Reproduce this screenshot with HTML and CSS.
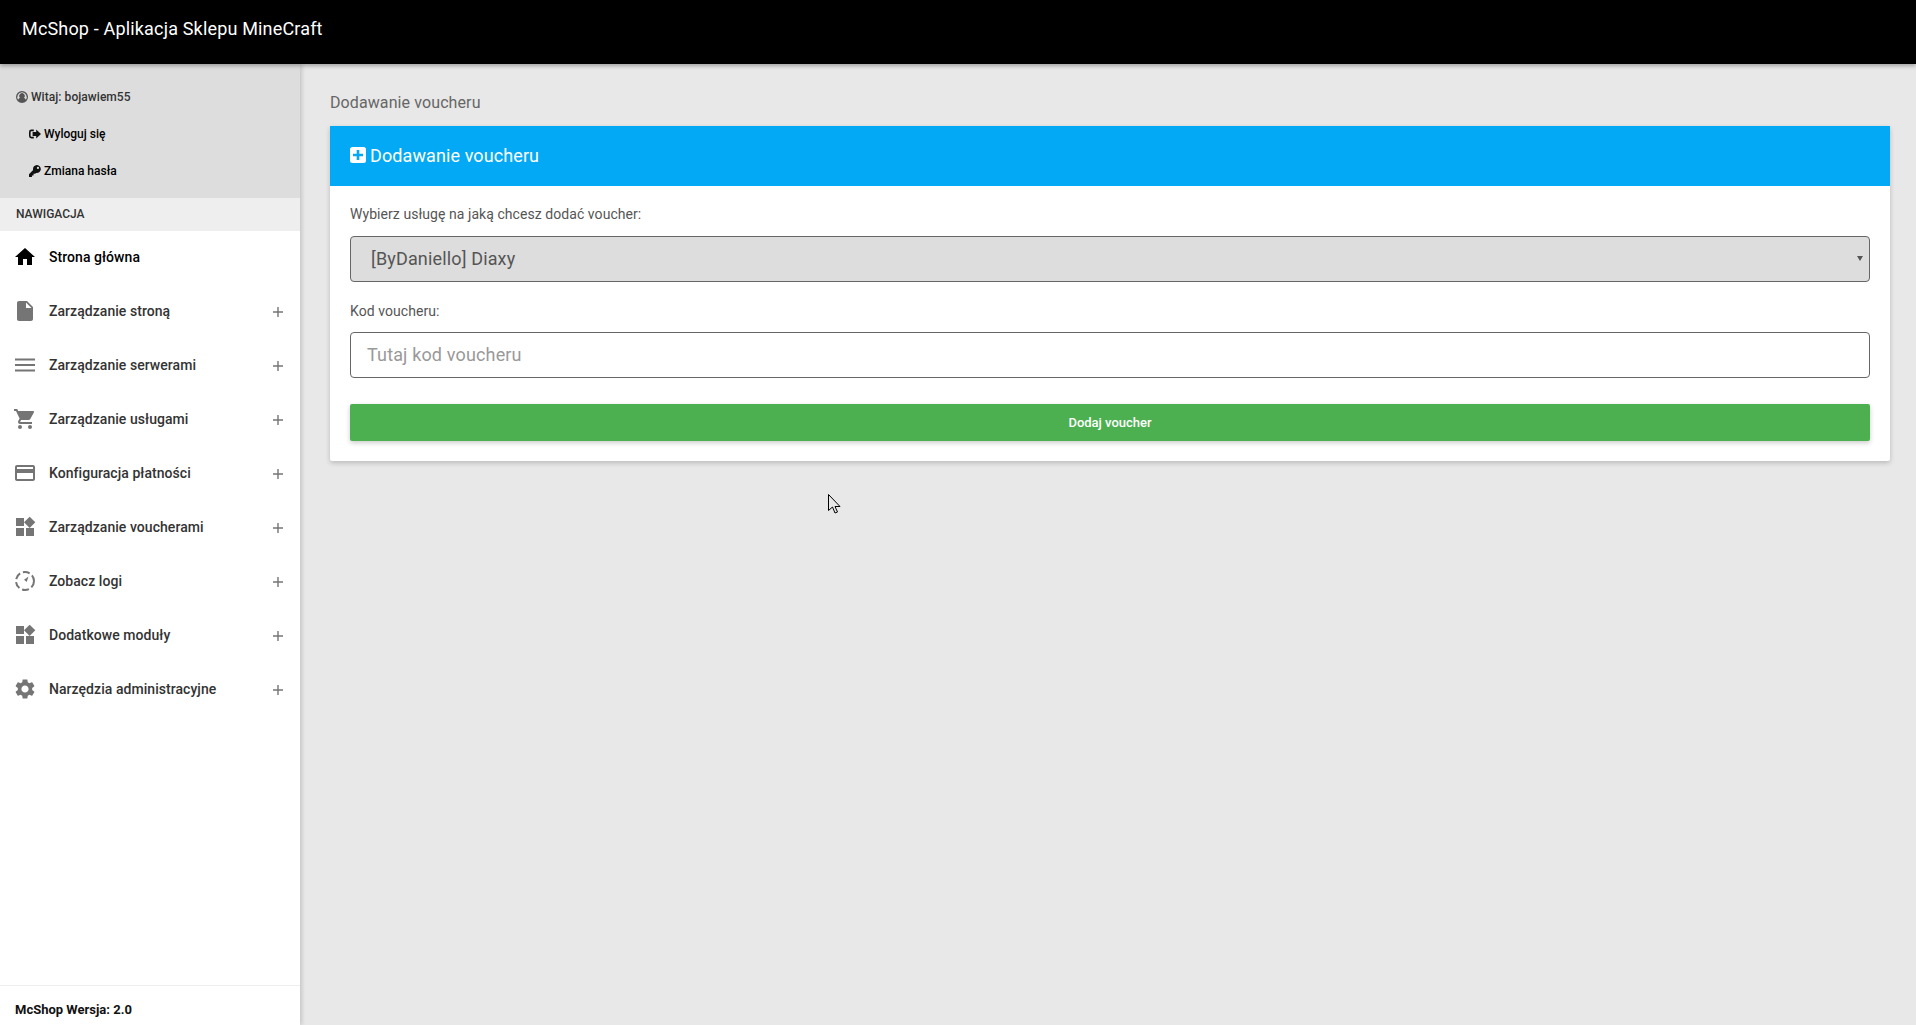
FILE: index.html
```html
<!DOCTYPE html>
<html lang="pl">
<head>
<meta charset="utf-8">
<title>McShop</title>
<link rel="stylesheet" href="styles.css">
</head>
<body>
<header class="topbar">McShop - Aplikacja Sklepu MineCraft</header>
<div class="layout">
  <aside class="sidebar">
    <div class="user-panel">
      <div class="user-row user-hello">
        <svg class="fa" viewBox="0.5 0.500 15 15"><path fill-rule="evenodd" d="M8 .5a7.500 7.500 0 1 0 0 15 7.500 7.500 0 0 0 0-15zm0 1.600a5.900 5.900 0 0 1 4.700 9.400c-.5-1.400-1.300-2.200-2.300-2.500a3.400 3.400 0 1 0-4.800 0c-1 .3-1.800 1.100-2.300 2.500A5.900 5.900 0 0 1 8 2.100z"/></svg>
        <span>Witaj: bojawiem55</span>
      </div>
      <div class="user-row user-link">
        <svg class="fa" viewBox="0.5 0.500 15 15"><path d="M6.500 2.500H3.500A3 3 0 0 0 .5 5.500v5a3 3 0 0 0 3 3h3v-2H3.500a1 1 0 0 1-1-1v-5a1 1 0 0 1 1-1h3z"/><path d="M9.500 2.500l6 5.500-6 5.500V10.500H5v-5h4.500z"/></svg>
        <span>Wyloguj się</span>
      </div>
      <div class="user-row user-link">
        <svg class="fa" viewBox="0.5 0.500 15 15"><path fill-rule="evenodd" d="M10.500.5a5 5 0 0 0-4.800 6.400L.5 12.100v3.400h3.700v-2h2v-2h2l1.100-1.100A5 5 0 1 0 10.500.5zm1.200 2.200a1.400 1.400 0 1 1 0 2.800 1.400 1.400 0 0 1 0-2.800z"/></svg>
        <span>Zmiana hasła</span>
      </div>
    </div>
    <div class="nav-title">NAWIGACJA</div>
    <nav class="nav">
      <a class="nav-item active">
        <svg class="mi" viewBox="0 0 24 24"><path d="M10 20v-6h4v6h5v-8h3L12 3 2 12h3v8z"/></svg>
        <span class="nav-label">Strona główna</span>
      </a>
      <a class="nav-item">
        <svg class="mi" viewBox="0 0 24 24"><path d="M6 2c-1.100 0-1.990.9-1.990 2L4 20c0 1.100.89 2 1.990 2H18c1.100 0 2-.9 2-2V8l-6-6H6zm7 7V3.500L18.500 9H13z"/></svg>
        <span class="nav-label">Zarządzanie stroną</span>
        <svg class="plus" viewBox="0 0 10 10"><path d="M4.300 0h1.400v4.300H10v1.400H5.700V10H4.300V5.700H0V4.300h4.300z"/></svg>
      </a>
      <a class="nav-item">
        <svg class="mi" viewBox="0 0 24 24"><path d="M2 5.500h20v2H2zM2 11h20v2H2zM2 16.500h20v2H2z"/></svg>
        <span class="nav-label">Zarządzanie serwerami</span>
        <svg class="plus" viewBox="0 0 10 10"><path d="M4.300 0h1.400v4.300H10v1.400H5.700V10H4.300V5.700H0V4.300h4.300z"/></svg>
      </a>
      <a class="nav-item">
        <svg class="mi" viewBox="0 0 24 24"><path d="M7 18c-1.100 0-1.990.9-1.990 2S5.900 22 7 22s2-.9 2-2-.9-2-2-2zM1 2v2h2l3.600 7.590-1.350 2.450c-.16.28-.25.61-.25.96 0 1.100.9 2 2 2h12v-2H7.420c-.14 0-.25-.11-.25-.25l.03-.12.9-1.630h7.450c.75 0 1.410-.41 1.750-1.030l3.580-6.490c.08-.14.12-.31.12-.48 0-.55-.45-1-1-1H5.210l-.94-2H1zm16 16c-1.100 0-1.990.9-1.990 2s.89 2 1.990 2 2-.9 2-2-.9-2-2-2z"/></svg>
        <span class="nav-label">Zarządzanie usługami</span>
        <svg class="plus" viewBox="0 0 10 10"><path d="M4.300 0h1.400v4.300H10v1.400H5.700V10H4.300V5.700H0V4.300h4.300z"/></svg>
      </a>
      <a class="nav-item">
        <svg class="mi" viewBox="0 0 24 24"><path d="M20 4H4c-1.110 0-1.990.89-1.990 2L2 18c0 1.110.89 2 2 2h16c1.110 0 2-.89 2-2V6c0-1.110-.89-2-2-2zm0 14H4v-6h16v6zm0-10H4V6h16v2z"/></svg>
        <span class="nav-label">Konfiguracja płatności</span>
        <svg class="plus" viewBox="0 0 10 10"><path d="M4.300 0h1.400v4.300H10v1.400H5.700V10H4.300V5.700H0V4.300h4.300z"/></svg>
      </a>
      <a class="nav-item">
        <svg class="mi" viewBox="0 0 24 24"><path d="M13 13v8h8v-8h-8zM3 21h8v-8H3v8zM3 3v8h8V3H3zm13.660-1.310L11 7.340 16.660 13l5.660-5.660-5.660-5.650z"/></svg>
        <span class="nav-label">Zarządzanie voucherami</span>
        <svg class="plus" viewBox="0 0 10 10"><path d="M4.300 0h1.400v4.300H10v1.400H5.700V10H4.300V5.700H0V4.300h4.300z"/></svg>
      </a>
      <a class="nav-item">
        <svg class="mi" viewBox="0 0 24 24"><circle class="dash" cx="12" cy="12" r="9"/><path d="M15.500 7.500l-1.800 5.500-2.700-2.200z"/></svg>
        <span class="nav-label">Zobacz logi</span>
        <svg class="plus" viewBox="0 0 10 10"><path d="M4.300 0h1.400v4.300H10v1.400H5.700V10H4.300V5.700H0V4.300h4.300z"/></svg>
      </a>
      <a class="nav-item">
        <svg class="mi" viewBox="0 0 24 24"><path d="M13 13v8h8v-8h-8zM3 21h8v-8H3v8zM3 3v8h8V3H3zm13.660-1.310L11 7.340 16.660 13l5.660-5.660-5.660-5.650z"/></svg>
        <span class="nav-label">Dodatkowe moduły</span>
        <svg class="plus" viewBox="0 0 10 10"><path d="M4.300 0h1.400v4.300H10v1.400H5.700V10H4.300V5.700H0V4.300h4.300z"/></svg>
      </a>
      <a class="nav-item">
        <svg class="mi" viewBox="0 0 24 24"><path d="M19.140 12.940c.04-.3.06-.61.06-.94 0-.32-.02-.64-.07-.94l2.030-1.580c.18-.14.23-.41.12-.61l-1.920-3.320c-.12-.22-.37-.29-.59-.22l-2.390.96c-.5-.38-1.030-.7-1.620-.94l-.36-2.540c-.04-.24-.24-.41-.48-.41h-3.840c-.24 0-.43.17-.47.41l-.36 2.540c-.59.24-1.130.57-1.620.94l-2.390-.96c-.22-.08-.47 0-.59.22L2.740 8.870c-.12.21-.08.47.12.61l2.030 1.580c-.05.3-.09.63-.09.94s.02.64.07.94l-2.030 1.580c-.18.14-.23.41-.12.61l1.920 3.320c.12.22.37.29.59.22l2.390-.96c.5.38 1.030.7 1.620.94l.36 2.540c.05.24.24.41.48.41h3.840c.24 0 .44-.17.47-.41l.36-2.540c.59-.24 1.130-.56 1.620-.94l2.390.96c.22.08.47 0 .59-.22l1.920-3.320c.12-.22.07-.47-.12-.61l-2.010-1.580zM12 15.600c-1.980 0-3.600-1.620-3.600-3.600s1.620-3.600 3.600-3.600 3.600 1.620 3.600 3.600-1.620 3.600-3.600 3.600z"/></svg>
        <span class="nav-label">Narzędzia administracyjne</span>
        <svg class="plus" viewBox="0 0 10 10"><path d="M4.300 0h1.400v4.300H10v1.400H5.700V10H4.300V5.700H0V4.300h4.300z"/></svg>
      </a>
    </nav>
    <footer class="sidebar-footer">McShop Wersja: 2.0</footer>
  </aside>
  <main class="main">
    <h1 class="page-title">Dodawanie voucheru</h1>
    <section class="card">
      <h2 class="card-header">
        <svg class="card-icon" viewBox="0 0 16 16"><path fill-rule="evenodd" d="M2.500 0h11A2.500 2.500 0 0 1 16 2.500v11a2.500 2.500 0 0 1-2.500 2.500h-11A2.500 2.500 0 0 1 0 13.500v-11A2.500 2.500 0 0 1 2.500 0zM6.700 3v3.700H3v2.600h3.700V13h2.600V9.300H13V6.700H9.300V3z"/></svg>
        <span>Dodawanie voucheru</span>
      </h2>
      <form class="card-body">
        <label class="field-label" for="service">Wybierz usługę na jaką chcesz dodać voucher:</label>
        <div class="select-wrap">
          <select class="field select" id="service">
            <option>[ByDaniello] Diaxy</option>
          </select>
        </div>
        <label class="field-label second" for="code">Kod voucheru:</label>
        <input class="field input" id="code" type="text" placeholder="Tutaj kod voucheru">
        <button class="submit" type="button">Dodaj voucher</button>
      </form>
    </section>
  </main>
</div>
<svg class="cursor" width="14" height="22" viewBox="0 0 14 22"><path d="M.5.5v16l4-3.500 2.500 6 2.500-1-2.500-5.500h5z" fill="#e8e8e8" stroke="#000"/></svg>
</body>
</html>
```
FILE: styles.css
```css
* { box-sizing: border-box; }
html, body { height: 100%; }
body {
  margin: 0;
  font-family: Roboto, "Liberation Sans", sans-serif;
  background: #e8e8e8;
  overflow: hidden;
  display: flex;
  flex-direction: column;
}
.topbar {
  height: 64px;
  flex: none;
  background: #000;
  color: #fff;
  font-size: 18px;
  font-weight: 400;
  letter-spacing: .17px;
  padding: 18px 0 0 22px;
  line-height: 22px;
  box-shadow: 0 2px 4px rgba(0,0,0,.3);
  position: relative;
  z-index: 3;
}
.layout { flex: 1; display: flex; min-height: 0; }
.sidebar {
  width: 300px;
  flex: none;
  background: #fff;
  box-shadow: 2px 0 4px rgba(0,0,0,.15);
  display: flex;
  flex-direction: column;
  position: relative;
  z-index: 2;
}
.user-panel {
  height: 134px;
  background: #ddd;
  padding-top: 14px;
  font-size: 12px;
  font-weight: 500;
}
.user-row {
  height: 37px;
  display: flex;
  align-items: center;
  gap: 3px;
}
.user-hello { padding-left: 16px; color: #333; letter-spacing: .05px; }
.user-hello .fa { fill: #555; }
.user-link { padding-left: 29px; color: #000; }
.fa { width: 12px; height: 12px; fill: #111; flex: none; }
.nav-title {
  height: 33px;
  background: #eee;
  color: #333;
  font-size: 12px;
  font-weight: 500;
  line-height: 33px;
  padding-left: 16px;
}
.nav { flex: 1; margin-top: -1px; }
.nav-item {
  height: 54px;
  display: flex;
  align-items: center;
  padding-left: 13px;
  padding-right: 17px;
  font-size: 14px;
  font-weight: 500;
  letter-spacing: .05px;
  color: #333;
}
.nav-item.active { color: #000; }
.nav-item.active .mi { fill: #000; }
.mi { width: 24px; height: 24px; fill: #757575; flex: none; }
.dash { fill: none; stroke: #757575; stroke-width: 2; stroke-dasharray: 7 3; }
.nav-label { margin-left: 12px; flex: 1; }
.plus { width: 10px; height: 10px; fill: #757575; flex: none; margin-top: 2px; }
.sidebar-footer {
  height: 40px;
  flex: none;
  border-top: 1px solid #eee;
  font-size: 13px;
  font-weight: 700;
  color: #111;
  padding: 16px 0 0 15px;
  line-height: 15px;
}
.main { flex: 1; padding: 0 26px 0 30px; min-width: 0; }
.page-title {
  margin: 0;
  padding-top: 29px;
  height: 62px;
  font-size: 16px;
  letter-spacing: .1px;
  line-height: 20px;
  font-weight: 400;
  color: #666;
}
.card {
  background: #fff;
  border-radius: 0 0 2px 2px;
  box-shadow: 0 2px 5px rgba(0,0,0,.2);
}
.card-header {
  margin: 0;
  height: 60px;
  background: #03a9f4;
  color: #fff;
  font-size: 18px;
  font-weight: 400;
  letter-spacing: .1px;
  display: flex;
  align-items: center;
  gap: 4px;
  padding: 0 0 2px 20px;
}
.card-icon { width: 16px; height: 16px; fill: #fff; flex: none; }
.card-body { display: flex; flex-direction: column; padding: 19px 20px 20px; }
.field-label {
  font-size: 14px;
  letter-spacing: .06px;
  line-height: 18px;
  color: #555;
  margin-bottom: 13px;
}
.field-label.second { margin-top: 20px; margin-bottom: 12px; }
.select-wrap { position: relative; }
.select-wrap::after {
  content: "";
  position: absolute;
  right: 7px;
  top: 20px;
  border-left: 3px solid transparent;
  border-right: 3px solid transparent;
  border-top: 5px solid #555;
}
.field {
  height: 46px;
  width: 100%;
  display: block;
  border: 1px solid #666;
  border-radius: 4px;
  font-family: Roboto, "Liberation Sans", sans-serif;
  font-size: 18px;
  letter-spacing: .15px;
  color: #555;
  outline: none;
}
.select { appearance: none; background: #ddd; padding: 0 16px 2px 20px; }
.input { background: #fff; padding: 0 0 2px 16px; }
.input::placeholder { color: #999; opacity: 1; }
.submit {
  margin-top: 26px;
  height: 37px;
  border: 0;
  border-radius: 2px;
  background: #4caf50;
  color: #fff;
  font-family: Roboto, "Liberation Sans", sans-serif;
  font-size: 13px;
  font-weight: 500;
  box-shadow: 0 2px 5px rgba(0,0,0,.2);
}
.cursor { position: absolute; left: 828px; top: 494px; }
```
